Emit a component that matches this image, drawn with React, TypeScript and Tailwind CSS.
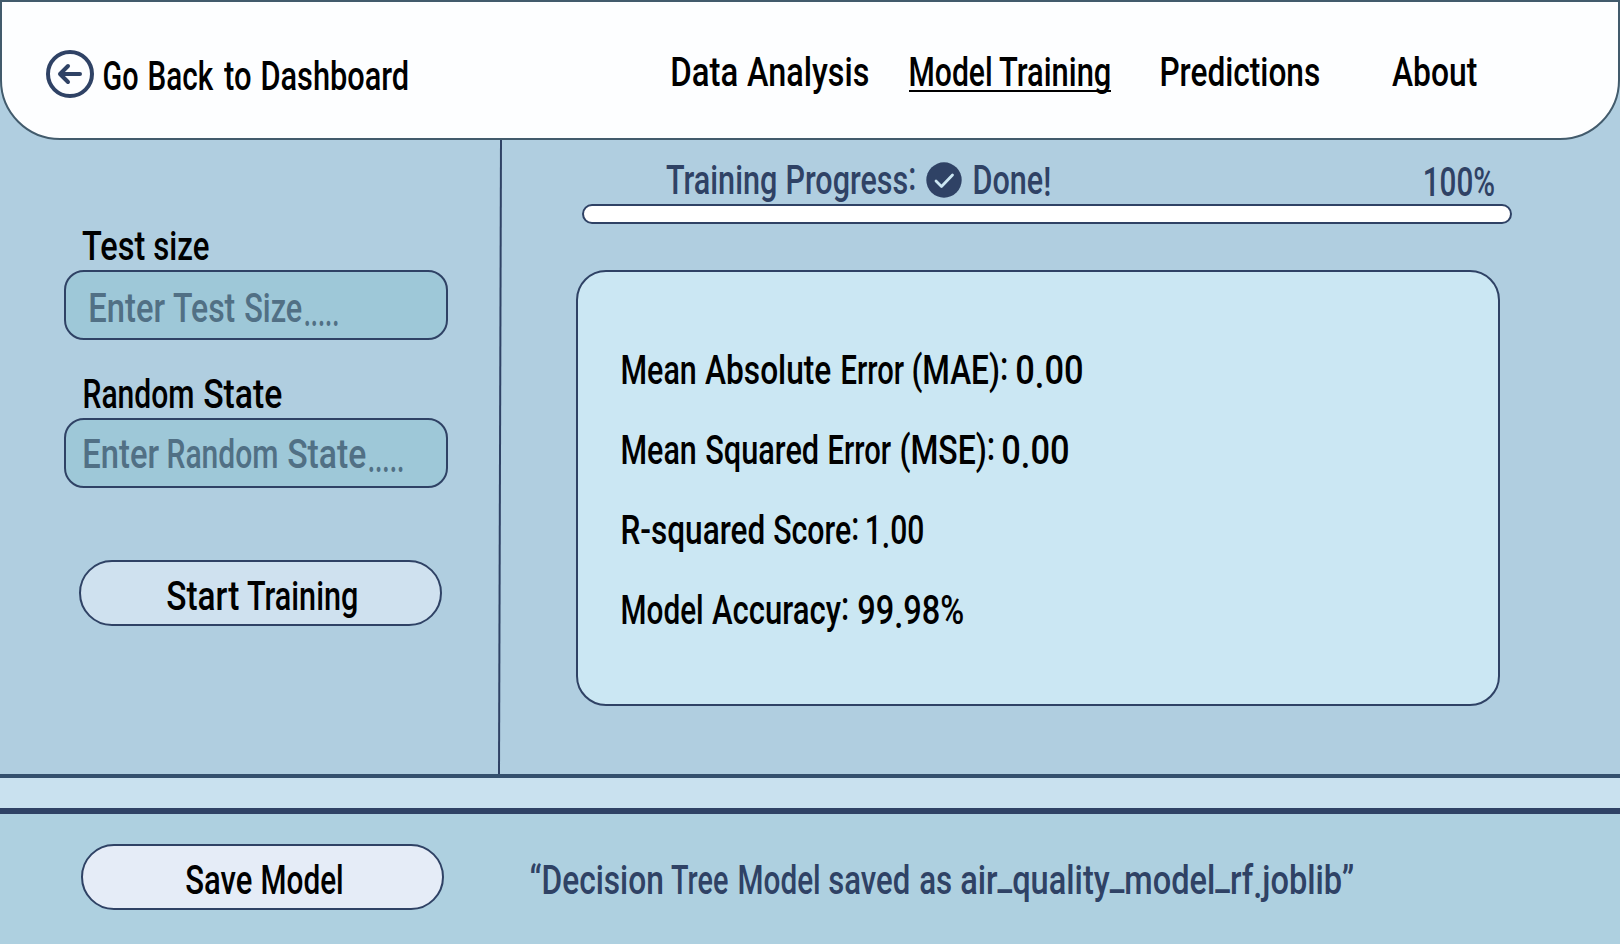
import React, { Fragment, useLayoutEffect, useRef, useState } from "react";

type WordSpec = [text: string, className: string];

/** Vertical shifts for punctuation that sits off the usual baseline. */
const shifts: Record<string, string> = {
  ".": "relative top-1",
  ":": "relative -top-[4px]",
  "_": "relative -top-[5px]",
  "!": "relative top-[2px]",
};

/** Condenses a word horizontally so that its ink fills the width of its box. */
function Word({ text, className }: { text: string; className: string }) {
  const box = useRef<HTMLSpanElement>(null);
  const [transform, setTransform] = useState("none");

  useLayoutEffect(() => {
    const el = box.current;
    const ctx = document.createElement("canvas").getContext("2d");
    if (!el || !ctx) return;
    const style = getComputedStyle(el);
    ctx.font = `${style.fontWeight} ${style.fontSize} ${style.fontFamily}`;
    const m = ctx.measureText(text);
    const ink = m.actualBoundingBoxLeft + m.actualBoundingBoxRight;
    const scale = el.clientWidth / ink;
    setTransform(`translateX(${m.actualBoundingBoxLeft * scale}px) scaleX(${scale})`);
  }, [text]);

  return (
    <span ref={box} className={`block h-10 shrink-0 ${className}`}>
      <span className="mt-px block w-max origin-left whitespace-nowrap" style={{ transform }}>
        {text.split(/([:_!]|\.+)/).map((part, i) =>
          shifts[part[0]] ? (
            <span key={i} className={shifts[part[0]]}>
              {part}
            </span>
          ) : (
            part
          ),
        )}
      </span>
    </span>
  );
}

function Line({ words, className = "" }: { words: WordSpec[]; className?: string }) {
  return (
    <span className={`flex h-10 shrink-0 ${className}`}>
      {words.map(([text, cls], i) => (
        <Fragment key={i}>
          {i > 0 && " "}
          <Word text={text} className={cls} />
        </Fragment>
      ))}
    </span>
  );
}

const metrics: WordSpec[][] = [
  [["Mean", "w-[73px]"], ["Absolute", "ml-[10px] w-[126px]"], ["Error", "ml-[11px] w-[62px]"], ["(MAE):", "ml-[9px] w-[94px]"], ["0.00", "ml-[10px] w-[65px]"]],
  [["Mean", "w-[73px]"], ["Squared", "ml-[11px] w-[112px]"], ["Error", "ml-[11px] w-[62px]"], ["(MSE):", "ml-[10px] w-[93px]"], ["0.00", "ml-[9px] w-[65px]"]],
  [["R-squared", "w-[142px]"], ["Score:", "ml-[10px] w-[84px]"], ["1.00", "ml-[9px] w-[56px]"]],
  [["Model", "w-[80px]"], ["Accuracy:", "ml-[10px] w-[136px]"], ["99.98%", "ml-[10px] w-[105px]"]],
];

function Header() {
  return (
    <header className="flex h-[140px] shrink-0 rounded-b-[60px] border-2 border-[#425b6c] bg-[#fdfeff]">
      <a className="flex pl-[44px]">
        <svg className="mt-[48px] h-12 w-12 text-[#2f4265]" viewBox="0 0 48 48" fill="none" stroke="currentColor" strokeWidth="4" strokeLinecap="round" strokeLinejoin="round">
          <circle cx="24" cy="24" r="22" />
          <path d="M34 24H14M22 16L14 24L22 32" />
        </svg>
        <Line
          className="mt-[54px] ml-[10px]"
          words={[["Go", "w-[34px]"], ["Back", "ml-[11px] w-[65px]"], ["to", "ml-[10px] w-[27px]"], ["Dashboard", "ml-[11px] w-[146px]"]]}
        />
      </a>
      <nav className="mt-[50px] ml-[264px] flex">
        <Line words={[["Data", "w-[65px]"], ["Analysis", "ml-[10px] w-[121px]"]]} />
        <span className="ml-[41px] h-10 w-[202px] border-b-2 border-black pl-px">
          <Line words={[["Model", "w-[81px]"], ["Training", "ml-[8px] w-[111px]"]]} />
        </span>
        <Line className="ml-[50px]" words={[["Predictions", "w-[158px]"]]} />
        <Line className="ml-[73px]" words={[["About", "w-[85px]"]]} />
      </nav>
    </header>
  );
}

function TrainingForm() {
  return (
    <section className="w-[498px] shrink-0 pt-[86px] pl-[64px]">
      <Line className="ml-[18px]" words={[["Test", "w-[63px]"], ["size", "ml-[9px] w-[55px]"]]} />
      <div className="mt-1 h-[70px] w-[384px] rounded-[20px] border-2 border-[#2f4265] bg-[#9ec8d8] pt-4 pl-[24px] text-[#517085]">
        <Line words={[["Enter", "w-[75px]"], ["Test", "ml-[8px] w-[62px]"], ["Size", "ml-[10px] w-[57px]"], [".....", "ml-[3px] w-[33px]"]]} />
      </div>
      <Line className="mt-[34px] ml-[20px]" words={[["Random", "w-[109px]"], ["State", "ml-[11px] w-[78px]"]]} />
      <div className="mt-1 h-[70px] w-[384px] rounded-[20px] border-2 border-[#2f4265] bg-[#9ec8d8] pt-[14px] pl-[18px] text-[#517085]">
        <Line words={[["Enter", "w-[75px]"], ["Random", "ml-[9px] w-[109px]"], ["State", "ml-[11px] w-[78px]"], [".....", "ml-[3px] w-[34px]"]]} />
      </div>
      <button className="mt-[72px] ml-[15px] flex h-[66px] w-[363px] rounded-full border-2 border-[#2f4265] bg-[#cfe1ef] pt-[14px] pl-[86px] text-left">
        <Line words={[["Start", "w-[72px]"], ["Training", "ml-[8px] w-[110px]"]]} />
      </button>
    </section>
  );
}

function Results() {
  return (
    <section className="flex-1 pt-5 pl-[72px]">
      <div className="flex h-[44px] pl-[90px] text-[#2f4265]">
        <Line words={[["Training", "w-[110px]"], ["Progress:", "ml-[11px] w-[128px]"]]} />
        <svg className="mt-[2px] ml-[11px] h-9 w-9" viewBox="0 0 36 36" fill="none">
          <circle cx="18" cy="18" r="17.7" fill="currentColor" />
          <path d="M10 19L15.5 24.5L26.5 13" stroke="#cbe6f2" strokeWidth="2.8" strokeLinecap="round" strokeLinejoin="round" />
        </svg>
        <Line className="ml-[12px]" words={[["Done!", "w-[76px]"]]} />
        <Line className="mt-[2px] ml-[375px]" words={[["100%", "w-[69px]"]]} />
      </div>
      <div className="ml-[6px] h-5 w-[930px] rounded-full border-2 border-[#2f4265] bg-white" />
      <div className="mt-[46px] flex h-[436px] w-[924px] flex-col gap-10 rounded-[30px] border-2 border-[#2f4265] bg-[#cbe7f3] pt-[78px] pl-[44px]">
        {metrics.map((words, i) => (
          <Line key={i} words={words} />
        ))}
      </div>
    </section>
  );
}

export default function App() {
  return (
    <div className="flex h-[944px] w-[1620px] flex-col overflow-hidden bg-[#b0cee0] font-['Roboto',sans-serif] text-[40px] leading-10 font-medium text-black">
      <Header />
      <main className="flex h-[634px] shrink-0">
        <TrainingForm />
        <svg className="h-[634px] w-[6px] shrink-0" viewBox="0 0 6 634">
          <line x1="3" y1="0" x2="1" y2="634" stroke="#2f4265" strokeWidth="2" />
        </svg>
        <Results />
      </main>
      <div className="h-10 shrink-0 border-t-4 border-b-6 border-t-[#34506e] border-b-[#2f4265] bg-[#c9e1ef]" />
      <footer className="flex flex-1 bg-[#aed0e0] pt-[30px] pl-[81px]">
        <button className="flex h-[66px] w-[363px] rounded-full border-2 border-[#2f4265] bg-[#e5ecf7] pt-[14px] pl-[103px] text-left">
          <Line words={[["Save", "w-[66px]"], ["Model", "ml-[10px] w-[80px]"]]} />
        </button>
        <Line
          className="mt-4 ml-[87px] text-[#2f4265]"
          words={[
            ["“Decision", "w-[131px]"],
            ["Tree", "ml-[9px] w-[57px]"],
            ["Model", "ml-[11px] w-[80px]"],
            ["saved", "ml-[10px] w-[80px]"],
            ["as", "ml-[11px] w-[31px]"],
            ["air_quality_model_rf.joblib”", "ml-[10px] w-[392px]"],
          ]}
        />
      </footer>
    </div>
  );
}
